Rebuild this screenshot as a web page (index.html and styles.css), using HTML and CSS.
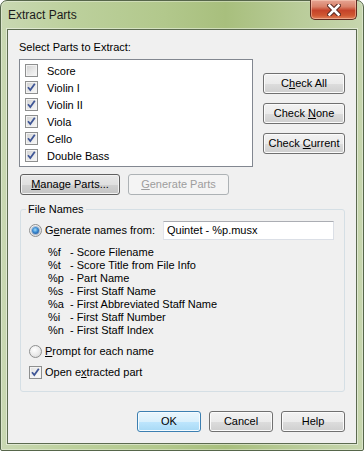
FILE: index.html
```html
<!DOCTYPE html>
<html>
<head>
<meta charset="utf-8">
<link rel="stylesheet" href="styles.css">
</head>
<body>
<div class="window">
  <div class="titlebar">
    <span class="title">Extract Parts</span>
    <div class="close">
      <svg width="14" height="12" viewBox="0 0 14 12">
        <path d="M2.5 1.5 L11.5 10.5 M11.5 1.5 L2.5 10.5" stroke="#5a2a22" stroke-width="4.6" stroke-linecap="square" fill="none"/>
        <path d="M2.5 1.5 L11.5 10.5 M11.5 1.5 L2.5 10.5" stroke="#ffffff" stroke-width="2.6" stroke-linecap="square" fill="none"/>
      </svg>
    </div>
  </div>
  <div class="client">
    <div class="label">Select Parts to Extract:</div>
    <div class="parts-row">
      <div class="listbox">
        <div class="item"><span class="cb"></span><span>Score</span></div>
        <div class="item"><span class="cb"><svg width="11" height="11" viewBox="0 0 11 11"><path d="M2 5.2 L4.3 8 L8.8 1.8" stroke="#3f5696" stroke-width="1.8" fill="none"/></svg></span><span>Violin I</span></div>
        <div class="item"><span class="cb"><svg width="11" height="11" viewBox="0 0 11 11"><path d="M2 5.2 L4.3 8 L8.8 1.8" stroke="#3f5696" stroke-width="1.8" fill="none"/></svg></span><span>Violin II</span></div>
        <div class="item"><span class="cb"><svg width="11" height="11" viewBox="0 0 11 11"><path d="M2 5.2 L4.3 8 L8.8 1.8" stroke="#3f5696" stroke-width="1.8" fill="none"/></svg></span><span>Viola</span></div>
        <div class="item"><span class="cb"><svg width="11" height="11" viewBox="0 0 11 11"><path d="M2 5.2 L4.3 8 L8.8 1.8" stroke="#3f5696" stroke-width="1.8" fill="none"/></svg></span><span>Cello</span></div>
        <div class="item"><span class="cb"><svg width="11" height="11" viewBox="0 0 11 11"><path d="M2 5.2 L4.3 8 L8.8 1.8" stroke="#3f5696" stroke-width="1.8" fill="none"/></svg></span><span>Double Bass</span></div>
      </div>
      <div class="side-buttons">
        <div class="btn"><span>C<u>h</u>eck All</span></div>
        <div class="btn"><span>Check <u>N</u>one</span></div>
        <div class="btn"><span>Check <u>C</u>urrent</span></div>
      </div>
    </div>
    <div class="manage-row">
      <div class="btn btn-manage"><span><u>M</u>anage Parts...</span></div>
      <div class="btn btn-disabled"><span><u>G</u>enerate Parts</span></div>
    </div>
    <fieldset class="group">
      <legend>File Names</legend>
      <div class="group-body">
        <div class="gen-row">
          <span class="radio"><span class="dot"></span></span>
          <span class="opt-text">G<u>e</u>nerate names from:</span>
          <div class="textbox">Quintet - %p.musx</div>
        </div>
        <div class="codes">
          <span>%f</span><span>- Score Filename</span>
          <span>%t</span><span>- Score Title from File Info</span>
          <span>%p</span><span>- Part Name</span>
          <span>%s</span><span>- First Staff Name</span>
          <span>%a</span><span>- First Abbreviated Staff Name</span>
          <span>%i</span><span>- First Staff Number</span>
          <span>%n</span><span>- First Staff Index</span>
        </div>
        <div class="opt-row">
          <span class="radio"></span>
          <span class="opt-text"><u>P</u>rompt for each name</span>
        </div>
        <div class="opt-row opt-row2">
          <span class="cb cb-plain"><svg width="11" height="11" viewBox="0 0 11 11"><path d="M2 5.2 L4.3 8 L8.8 1.8" stroke="#3f5696" stroke-width="1.8" fill="none"/></svg></span>
          <span class="opt-text">Open e<u>x</u>tracted part</span>
        </div>
      </div>
    </fieldset>
    <div class="footer">
      <div class="btn btn-default"><span>OK</span></div>
      <div class="btn"><span>Cancel</span></div>
      <div class="btn"><span>Help</span></div>
    </div>
  </div>
</div>
</body>
</html>
```

FILE: styles.css
```css
* { box-sizing: border-box; }
html, body { margin: 0; padding: 0; }
body {
  width: 364px;
  height: 451px;
  overflow: hidden;
  background: #ffffff;
  font-family: "Liberation Sans", Arial, sans-serif;
  font-size: 11px;
  color: #000;
}
.window {
  width: 364px;
  height: 451px;
  display: flex;
  flex-direction: column;
  padding: 0 6px 6px 6px;
  border: 1px solid #56664a;
  border-radius: 7px 7px 2px 2px;
  background:
    linear-gradient(90deg, #c9d8b2 0%, #bcd09c 20%, #b2c88c 45%, #a8bf7d 62%, #b9cc99 82%, #c7d6ae 100%);
  box-shadow: inset 0 0 0 1px rgba(255,255,255,0.35);
}
.titlebar {
  height: 28px;
  display: flex;
  justify-content: space-between;
  align-items: flex-start;
  flex: none;
}
.title {
  padding: 7px 0 0 1px;
  font-size: 12px;
  line-height: 15px;
  color: #1b1b1b;
}
.close {
  width: 47px;
  height: 20px;
  margin-top: -1px;
  border: 1px solid #5e2a20;
  border-top: none;
  border-radius: 0 0 5px 5px;
  background: linear-gradient(#e6a594 0%, #d9826a 35%, #c5432a 55%, #cf5631 80%, #e0805a 100%);
  box-shadow: inset 0 0 0 1px rgba(255,220,200,0.45);
  display: flex;
  align-items: center;
  justify-content: center;
}
.client {
  flex: 1;
  border: 1px solid #5c6b50;
  box-shadow: 0 0 0 1px rgba(255,255,255,0.45);
  background: #f0f0f0;
  padding: 0 11px;
  display: flex;
  flex-direction: column;
}
.label {
  margin-top: 11px;
  line-height: 13px;
}
.parts-row {
  display: flex;
  margin-top: 5px;
}
.listbox {
  width: 234px;
  height: 108px;
  border: 1px solid #828790;
  background: #fff;
  padding: 2px 0 0 5px;
}
.item {
  height: 17px;
  display: flex;
  align-items: center;
}
.item > span:last-child { margin-left: 9px; }
.cb {
  width: 13px;
  height: 13px;
  border: 1px solid #8e8f8f;
  background: linear-gradient(135deg, #cfcfcf 0%, #e6e6e6 50%, #f9f9f9 100%);
  box-shadow: inset 0 0 0 1px #f3f3f3;
  display: grid;
  place-items: center;
  flex: none;
}
.cb-plain {
  background: linear-gradient(135deg, #dedede 0%, #f0f0f0 50%, #fdfdfd 100%);
}
.side-buttons {
  margin-left: 10px;
  padding-top: 14px;
  width: 82px;
  display: flex;
  flex-direction: column;
  gap: 9px;
}
.btn {
  height: 21px;
  border: 1px solid #707070;
  border-radius: 3px;
  background: linear-gradient(#f2f2f2 0%, #ebebeb 50%, #dddddd 51%, #cfcfcf 100%);
  box-shadow: inset 0 0 0 1px #fbfbfb;
  display: flex;
  align-items: center;
  justify-content: center;
  line-height: 13px;
  white-space: nowrap;
}
.manage-row {
  display: flex;
  gap: 8px;
  margin: 7px 0 0 1px;
}
.btn-manage {
  width: 100px;
  border-color: #5f5f5f;
  background: linear-gradient(#e9e9e9 0%, #e0e0e0 50%, #d1d1d1 51%, #c4c4c4 100%);
  box-shadow: inset 0 0 0 1px #f2f2f2;
}
.btn-disabled {
  width: 101px;
  color: #9d9d9d;
  border-color: #adb2b5;
  background: #f4f4f4;
  box-shadow: none;
}
.group {
  margin: 8px 0 0 1px;
  padding: 0;
  min-width: 0;
  border: 1px solid #d5dfe5;
  border-radius: 3px;
}
.group legend {
  margin-left: 5px;
  padding: 0 2px;
  line-height: 13px;
}
.group-body {
  padding: 5px 10px 12px 8px;
}
.gen-row {
  display: flex;
  align-items: center;
  height: 19px;
}
.radio {
  width: 13px;
  height: 13px;
  border-radius: 50%;
  border: 1px solid #8e8f8f;
  background: radial-gradient(circle at 40% 35%, #ffffff 0%, #ececec 50%, #d2d2d2 100%);
  display: grid;
  place-items: center;
  flex: none;
}
.dot {
  width: 7px;
  height: 7px;
  border-radius: 50%;
  background: radial-gradient(circle at 45% 40%, #9fdcfb 0%, #3a8ad0 45%, #173f84 100%);
  box-shadow: 0 0 0 1px rgba(40,90,150,0.35);
}
.opt-text {
  margin-left: 3px;
  line-height: 13px;
}
.textbox {
  margin-left: auto;
  width: 171px;
  height: 19px;
  background: #fff;
  border: 1px solid #dbdfe6;
  border-top-color: #abadb3;
  border-left-color: #e2e3ea;
  padding-left: 3px;
  line-height: 17px;
}
.codes {
  display: grid;
  grid-template-columns: 22px auto;
  line-height: 13px;
  margin: 6px 0 0 19px;
}
.opt-row {
  display: flex;
  align-items: center;
  height: 13px;
  margin-top: 8px;
}
.opt-row2 { margin-top: 8px; }
.footer {
  display: flex;
  justify-content: flex-end;
  gap: 8px;
  margin-top: 19px;
}
.footer .btn { width: 64px; }
.btn-default {
  border-color: #3c7fb1;
  background: linear-gradient(#eaf6fd 0%, #d9f0fc 50%, #bee6fd 51%, #a7d9f5 100%);
  box-shadow: inset 0 0 0 1px #f4fbff;
}
```
